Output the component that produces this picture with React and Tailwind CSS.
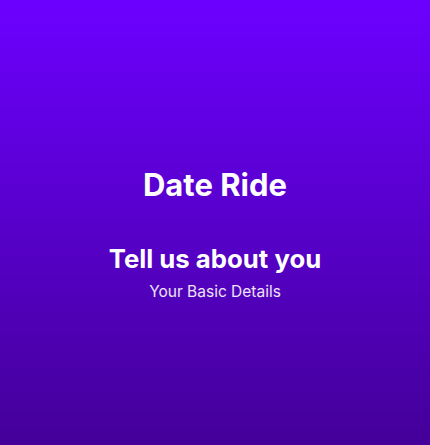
import React from 'react';

const App = () => {
  return (
    <div
      className="h-[445px] w-full bg-gradient-to-b from-[#6c00ff] to-[#440099] flex flex-col items-center justify-center pt-[23px] text-white text-center"
      style={{ fontFamily: 'Inter, "Noto Sans", sans-serif' }}
    >
      <h1 className="text-[31px] leading-[36px] font-bold">Date Ride</h1>
      <h2 className="mt-[40px] text-[25.75px] leading-[32px] font-bold">Tell us about you</h2>
      <p className="mt-[7px] text-[15.5px] leading-[20px] text-white/90">Your Basic Details</p>
    </div>
  );
};

export default App;
